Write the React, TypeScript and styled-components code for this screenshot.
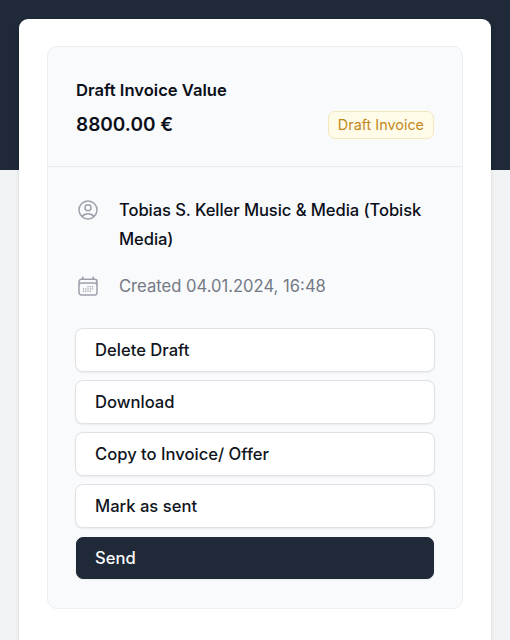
import React from "react";
import styled, { createGlobalStyle, css } from "styled-components";

const GlobalStyle = createGlobalStyle`
  *, *::before, *::after { box-sizing: border-box; }
  body { margin: 0; background: #f2f3f5; font-family: Inter, sans-serif; color: #0b0f19; overflow: hidden; }
`;

const Page = styled.main`
  height: 640px;
  padding: 19px 19px 0;
  overflow: hidden;
  background: linear-gradient(#1f2937 0 170px, #f2f3f5 170px);
`;

const Card = styled.section`
  height: 660px;
  padding: 27px 28px 0;
  border-radius: 9px;
  background: #fff;
  box-shadow: 0 1px 3px rgba(0, 0, 0, 0.12), 0 4px 10px rgba(0, 0, 0, 0.03);
`;

const Summary = styled.article`
  height: 563px;
  border: 1.5px solid #eceef0;
  border-radius: 10px;
  background: #f9fafc;
`;

const Header = styled.header`
  display: flex;
  align-items: flex-end;
  justify-content: space-between;
  height: 120px;
  padding: 0 28px 27px;
  border-bottom: 1px solid #e9ebee;
`;

const Heading = styled.div`
  display: flex;
  flex-direction: column;
  margin-bottom: -2px;
`;

const Label = styled.h2`
  margin: 0;
  font-size: 16.6px;
  font-weight: 600;
  line-height: 29px;
`;

const Amount = styled.p`
  margin: 4px 0 0;
  font-size: 19px;
  font-weight: 600;
  line-height: 32px;
`;

const Badge = styled.span`
  height: 28px;
  padding: 0 9px;
  border: 1px solid #f3e7bb;
  border-radius: 7px;
  background: #fefce8;
  color: #c3871b;
  font-size: 14.4px;
  line-height: 26px;
  white-space: nowrap;
`;

const Details = styled.div`
  display: flex;
  flex-direction: column;
  gap: 19px;
  padding: 29px 28px 0;
`;

const Detail = styled.div<{ $muted?: boolean }>`
  display: flex;
  align-items: flex-start;
  gap: 19px;
  color: ${({ $muted }) => ($muted ? "#747985" : "#0b0f19")};
  font-size: 16.6px;
  font-weight: ${({ $muted }) => ($muted ? 400 : 500)};
  letter-spacing: ${({ $muted }) => ($muted ? "0" : "-0.08px")};
  line-height: 28.5px;
`;

const Icon = styled.svg`
  flex: none;
  width: 24px;
  height: 24px;
  margin-top: 2px;
  fill: none;
  stroke: #9ca0aa;
  stroke-width: 1.5;
  stroke-linecap: round;
  stroke-linejoin: round;
`;

const Actions = styled.div`
  display: flex;
  flex-direction: column;
  gap: 8px;
  padding: 27px 27px 0;
`;

const Action = styled.button<{ $primary?: boolean }>`
  height: 44px;
  padding: 0 19px;
  border: 1px solid #dfe1e4;
  border-radius: 8px;
  background: #fff;
  box-shadow: 0 1px 2px rgba(0, 0, 0, 0.06);
  color: #101521;
  font: 500 16.6px/42px Inter, sans-serif;
  text-align: left;
  ${({ $primary }) =>
    $primary &&
    css`
      height: 42px;
      margin: 1px 1px 0;
      border-color: #1f2937;
      border-radius: 7px;
      padding: 0 18px;
      background: #1f2937;
      color: #f9fafb;
      line-height: 40px;
    `}
`;

const actions = ["Delete Draft", "Download", "Copy to Invoice/ Offer", "Mark as sent"];

export default function App() {
  return (
    <>
      <GlobalStyle />
      <Page>
        <Card>
          <Summary>
            <Header>
              <Heading>
                <Label>Draft Invoice Value</Label>
                <Amount>8800.00 €</Amount>
              </Heading>
              <Badge>Draft Invoice</Badge>
            </Header>
            <Details>
              <Detail>
                <Icon viewBox="0 0 24 24" aria-hidden="true">
                  <path d="M17.982 18.725A7.488 7.488 0 0 0 12 15.75a7.488 7.488 0 0 0-5.982 2.975m11.963 0a9 9 0 1 0-11.963 0m11.963 0A8.966 8.966 0 0 1 12 21a8.966 8.966 0 0 1-5.982-2.275M15 9.75a3 3 0 1 1-6 0 3 3 0 0 1 6 0Z" />
                </Icon>
                <span>Tobias S. Keller Music &amp; Media (Tobisk Media)</span>
              </Detail>
              <Detail $muted>
                <Icon viewBox="0 0 24 24" aria-hidden="true">
                  <path d="M6.75 3v2.25M17.25 3v2.25M3 18.75V7.5a2.25 2.25 0 0 1 2.25-2.25h13.5A2.25 2.25 0 0 1 21 7.5v11.25m-18 0A2.25 2.25 0 0 0 5.25 21h13.5A2.25 2.25 0 0 0 21 18.75m-18 0v-7.5A2.25 2.25 0 0 1 5.25 9h13.5A2.25 2.25 0 0 1 21 11.25v7.5m-9-6h.008v.008H12v-.008ZM12 15h.008v.008H12V15Zm0 2.25h.008v.008H12v-.008ZM9.75 15h.008v.008H9.75V15Zm0 2.25h.008v.008H9.75v-.008ZM7.5 15h.008v.008H7.5V15Zm0 2.25h.008v.008H7.5v-.008Zm6.75-4.5h.008v.008h-.008v-.008Zm0 2.25h.008v.008h-.008V15Zm0 2.25h.008v.008h-.008v-.008Zm2.25-4.5h.008v.008H16.5v-.008Zm0 2.25h.008v.008H16.5V15Z" />
                </Icon>
                <span>Created 04.01.2024, 16:48</span>
              </Detail>
            </Details>
            <Actions>
              {actions.map((label) => (
                <Action key={label}>{label}</Action>
              ))}
              <Action $primary>Send</Action>
            </Actions>
          </Summary>
        </Card>
      </Page>
    </>
  );
}
